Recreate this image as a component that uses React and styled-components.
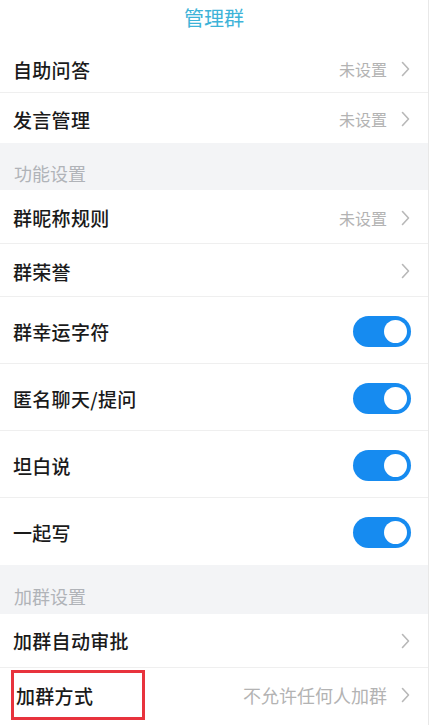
import React from "react";
import styled, { createGlobalStyle } from "styled-components";

const GlobalStyle = createGlobalStyle`
    html, body {
        margin: 0;
        padding: 0;
        background: #ffffff;
    }
    body {
        font-family: "Noto Sans CJK SC", "Noto Sans", sans-serif;
    }
`;

const Page = styled.div`
    width: 428px;
    height: 725px;
    overflow: hidden;
    border-right: 1px solid #e8e8e8;
    background: #ffffff;
`;

const Header = styled.div`
    height: 46px;
    box-sizing: border-box;
    padding-top: 3px;
    text-align: center;
    color: #3db3d8;
    font-size: 20px;
    line-height: 30px;
`;

const SectionTitle = styled.div`
    height: ${(p) => p.h}px;
    box-sizing: border-box;
    padding: ${(p) => p.top}px 0 0 14px;
    background: #f3f4f6;
    color: #b0b3b8;
    font-size: 18px;
    line-height: 24px;
`;

const Row = styled.div`
    height: ${(p) => p.h}px;
    box-sizing: border-box;
    display: flex;
    align-items: center;
    justify-content: space-between;
    padding: ${(p) => (p.shift || 0)}px 18px 0 13px;
    border-bottom: ${(p) => (p.last ? "none" : "1px solid #efefef")};
`;

const Label = styled.span`
    font-size: 19px;
    font-weight: 500;
    color: #1a1a1a;
    letter-spacing: 0.3px;
`;

const Marked = styled.span`
    display: inline-flex;
    align-items: center;
    margin-left: -2px;
    padding: 0 49px 0 2px;
    height: 50px;
    border: 3px solid #e8333d;
    box-sizing: border-box;
`;

const Right = styled.div`
    display: flex;
    align-items: center;
    gap: 14px;
`;

const Value = styled.span`
    font-size: ${(p) => p.size || 16}px;
    color: #b3b3b3;
`;

const Chevron = () => (
    <svg width="9" height="16" viewBox="0 0 9 16">
        <path d="M1.5 1.5 L7.5 8 L1.5 14.5" fill="none" stroke="#b8b8b8" strokeWidth="1.6" strokeLinecap="round" strokeLinejoin="round" />
    </svg>
);

const Toggle = styled.div`
    width: 58px;
    height: 31px;
    border-radius: 16px;
    background: #168bf0;
    position: relative;
    margin-right: -1px;
    &::after {
        content: "";
        position: absolute;
        right: 4px;
        top: 4px;
        width: 23px;
        height: 23px;
        border-radius: 50%;
        background: #ffffff;
    }
`;

const ArrowRow = ({ label, value, valueSize, h, shift, last, marked }) => (
    <Row h={h} shift={shift} last={last}>
        {marked ? (
            <Marked>
                <Label>{label}</Label>
            </Marked>
        ) : (
            <Label>{label}</Label>
        )}
        <Right>
            {value && <Value size={valueSize}>{value}</Value>}
            <Chevron />
        </Right>
    </Row>
);

const ToggleRow = ({ label, last }) => (
    <Row h={67} shift={2} last={last}>
        <Label>{label}</Label>
        <Toggle />
    </Row>
);

const App = () => {
    return (
        <Page>
            <GlobalStyle />
            <Header>管理群</Header>
            <ArrowRow label="自助问答" value="未设置" h={47} />
            <ArrowRow label="发言管理" value="未设置" h={50} shift={2} last />
            <SectionTitle h={47} top={18}>功能设置</SectionTitle>
            <ArrowRow label="群昵称规则" value="未设置" h={54} shift={2} />
            <ArrowRow label="群荣誉" h={53} shift={2} />
            <ToggleRow label="群幸运字符" />
            <ToggleRow label="匿名聊天/提问" />
            <ToggleRow label="坦白说" />
            <ToggleRow label="一起写" last />
            <SectionTitle h={49} top={19}>加群设置</SectionTitle>
            <ArrowRow label="加群自动审批" h={54} />
            <ArrowRow label="加群方式" value="不允许任何人加群" valueSize={18} h={54} marked last />
        </Page>
    );
};

export default App;
